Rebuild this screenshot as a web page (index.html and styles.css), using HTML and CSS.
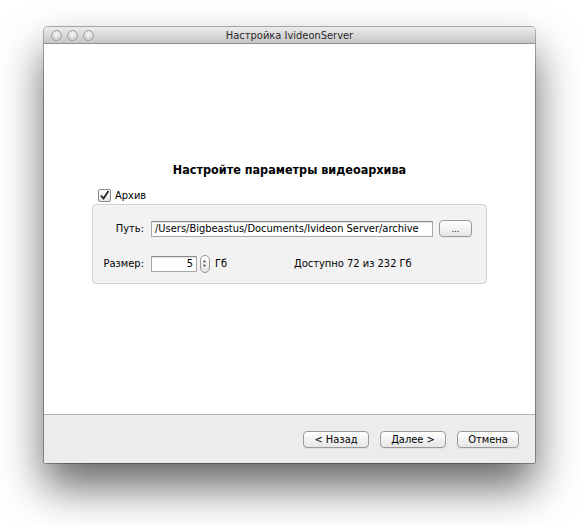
FILE: index.html
```html
<!DOCTYPE html>
<html lang="ru">
<head>
    <meta charset="UTF-8">
    <title>Настройка IvideonServer</title>
    <link rel="stylesheet" href="styles.css">
</head>
<body>

<div class="window">
    <div class="titlebar">
        <div class="lights"><span></span><span></span><span></span></div>
        <div class="title">Настройка IvideonServer</div>
    </div>

    <div class="content">
        <h1>Настройте параметры видеоархива</h1>

        <label class="check">
            <span class="box">
                <svg width="11" height="11" viewBox="0 0 11 11"><path d="M2 5.5 L4.5 8.5 L9.5 1" fill="none" stroke="#222" stroke-width="1.8"/></svg>
            </span>
            Архив
        </label>

        <div class="group">
            <div class="row">
                <span class="lbl">Путь:</span>
                <div class="field path">/Users/Bigbeastus/Documents/Ivideon Server/archive</div>
                <button class="btn small">...</button>
            </div>
            <div class="row">
                <span class="lbl">Размер:</span>
                <div class="field size">5</div>
                <span class="stepper">
                    <svg width="10" height="17" viewBox="0 0 10 17"><path d="M3 7 L5 4.5 L7 7 Z M3 10 L5 12.5 L7 10 Z" fill="#555"/></svg>
                </span>
                <span class="unit">Гб</span>
                <span class="avail">Доступно 72 из 232 Гб</span>
            </div>
        </div>
    </div>

    <div class="footer">
        <button class="btn wide">&lt; Назад</button>
        <button class="btn wide">Далее &gt;</button>
        <button class="btn cancel">Отмена</button>
    </div>
</div>

</body>
</html>
```

FILE: styles.css
```css
html, body { min-height: 526px; }
body { margin: 0; background: #fff; font-family: "DejaVu Sans Condensed", "DejaVu Sans", sans-serif; font-size: 11px; color: #000; }

.window { width: 491px; margin: 27px 0 0 44px; background: #fff; border-radius: 4px 4px 2px 2px; box-shadow: 0 0 0 1px rgba(0,0,0,0.3), 0 24px 44px rgba(0,0,0,0.6); overflow: hidden; }

.titlebar { height: 17px; display: flex; align-items: center; position: relative; background: linear-gradient(#ececec, #c6c6c6); border-bottom: 1px solid #8f8f8f; box-sizing: border-box; }
.lights { display: flex; gap: 5px; padding-left: 7px; }
.lights span { width: 9px; height: 9px; border-radius: 50%; border: 1px solid #9c9c9c; background: radial-gradient(circle at 50% 35%, #f4f4f4, #c8c8c8); }
.title { position: absolute; left: 0; right: 0; text-align: center; font-size: 11px; color: #2a2a2a; }

.content { height: 371px; padding: 118px 48px 0; box-sizing: border-box; border-bottom: 1px solid #b4b4b4; }
h1 { margin: 0; text-align: center; font-size: 12.5px; font-weight: bold; line-height: 16px; color: #000; }

.check { display: flex; align-items: center; gap: 4px; margin-top: 10px; margin-left: 6px; height: 14px; }
.box { width: 11px; height: 11px; border: 1px solid #888; border-radius: 2px; background: linear-gradient(#fff, #e4e4e4); display: flex; }

.group { margin-top: 2px; height: 80px; box-sizing: border-box; padding: 15px 0 0; background: #f2f2f2; border: 1px solid #d2d2d2; border-radius: 4px; }
.row { display: flex; align-items: center; height: 17px; }
.row + .row { margin-top: 18px; }
.lbl { width: 51px; text-align: right; margin-right: 7px; }

.field { height: 16px; box-sizing: border-box; background: #fff; border: 1px solid #a8a8a8; border-top-color: #8a8a8a; box-shadow: inset 0 1px 1px rgba(0,0,0,0.12); padding: 0 3px; line-height: 14px; white-space: nowrap; overflow: hidden; }
.path { width: 282px; }
.size { width: 46px; text-align: right; }

.stepper { margin-left: 3px; width: 10px; height: 18px; box-sizing: border-box; border: 1px solid #999; border-radius: 5px; background: linear-gradient(#fff, #e2e2e2); display: flex; align-items: center; justify-content: center; }
.stepper svg { margin-left: -1px; }
.unit { margin-left: 5px; width: 20px; }
.avail { margin-left: 59px; }

.btn { font-family: inherit; font-size: 11px; color: #000; height: 17px; padding: 0; border: 1px solid #9a9a9a; border-radius: 4px; background: linear-gradient(#ffffff, #e6e6e6); box-shadow: 0 1px 0 rgba(0,0,0,0.05); line-height: 14px; }
.small { width: 33px; margin-left: 6px; font-size: 9px; }

.footer { height: 48px; background: #ececec; display: flex; justify-content: flex-end; align-items: flex-start; gap: 11px; padding: 16px 16px 0 0; box-sizing: border-box; }
.wide { width: 66px; }
.cancel { width: 62px; }
```
